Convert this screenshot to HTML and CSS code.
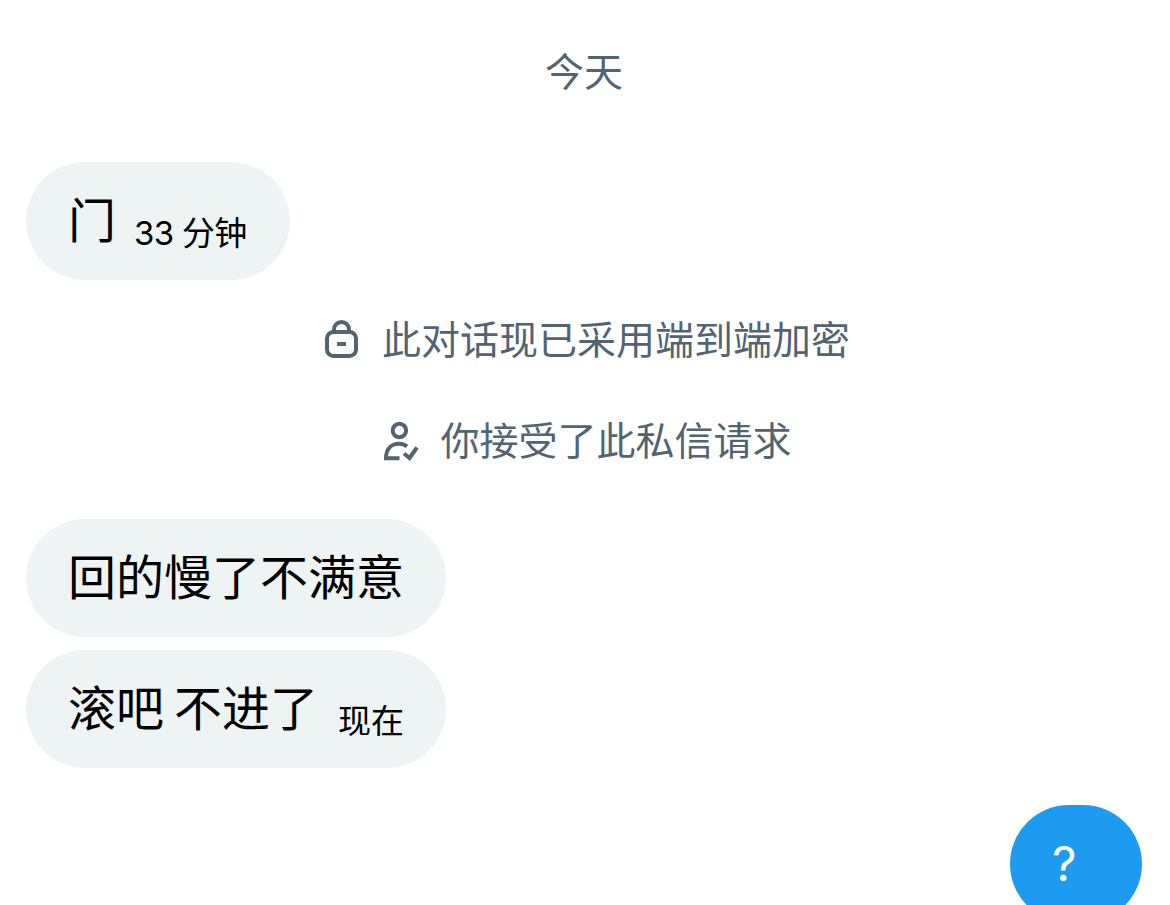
FILE: index.html
```html
<!DOCTYPE html>
<html lang="zh-CN">
<head>
<meta charset="utf-8">
<title>私信</title>
<link rel="stylesheet" href="styles.css">
</head>
<body>
<main class="chat">
  <div class="date">今天</div>
  <div class="bubble first"><span class="text">门</span><span class="time">33 分钟</span></div>
  <div class="notice lock">
    <svg class="icon" width="40" height="44" viewBox="0 0 40 44" fill="none" stroke="currentColor" stroke-width="4"><rect x="5" y="13" width="29" height="24" rx="6.5"/><path d="M12 13v-2.500a7.500 7.500 0 0 1 15 0v2.500M15 25h9"/></svg>
    <span>此对话现已采用端到端加密</span>
  </div>
  <div class="notice accepted">
    <svg class="icon" width="40" height="44" viewBox="0 0 40 44" fill="none" stroke="currentColor" stroke-width="4"><circle cx="19.4" cy="10.5" r="6.700"/><path d="M19.500 38.300H6c0-9 5-14.500 13-14.500 3.500 0 6 1 8 2.700M24 33.500l5.500 4.500 7.500-10.500"/></svg>
    <span>你接受了此私信请求</span>
  </div>
  <div class="bubble second"><span class="text">回的慢了不满意</span></div>
  <div class="bubble third"><span class="text">滚吧 不进了</span><span class="time">现在</span></div>
  <div class="bubble mine"><span class="text">?</span></div>
</main>
</body>
</html>
```
FILE: styles.css
```css
* { box-sizing: border-box; }
body { margin: 0; background: #fff; font-family: Roboto, "Noto Sans CJK SC", sans-serif; font-weight: 400; }
.chat { height: 905px; overflow: hidden; display: flex; flex-direction: column; align-items: flex-start; padding: 49px 28px 0 26px; }
.date { align-self: center; height: 48px; line-height: 48px; font-size: 39px; color: #536471; }
.bubble { flex: none; display: flex; align-items: flex-start; height: 118px; border-radius: 59px; padding: 0 42px; background: #eef3f4; color: #000; line-height: 119px; white-space: nowrap; }
.text { font-size: 48px; }
.time { font-size: 33px; padding-top: 12px; }
.first { width: 264px; margin-top: 65px; }
.first .time { margin-left: 18px; font-family: Inter, "Noto Sans CJK SC", sans-serif; letter-spacing: -0.7px; }
.notice { flex: none; align-self: center; display: flex; align-items: center; height: 50px; line-height: 50px; font-size: 39px; color: #536471; white-space: nowrap; padding-left: 4px; }
.icon { flex: none; margin-right: 20px; }
.lock { margin-top: 36px; }
.accepted { margin-top: 51px; }
.second { width: 420px; margin-top: 52px; }
.third { width: 420px; margin-top: 13px; }
.third .text { word-spacing: -2px; }
.third .time { margin-left: 20px; }
.mine { align-self: flex-end; width: 132px; margin-top: 37px; background: #1d9bf0; color: #fff; font-family: Inter, sans-serif; line-height: 117px; }
```
